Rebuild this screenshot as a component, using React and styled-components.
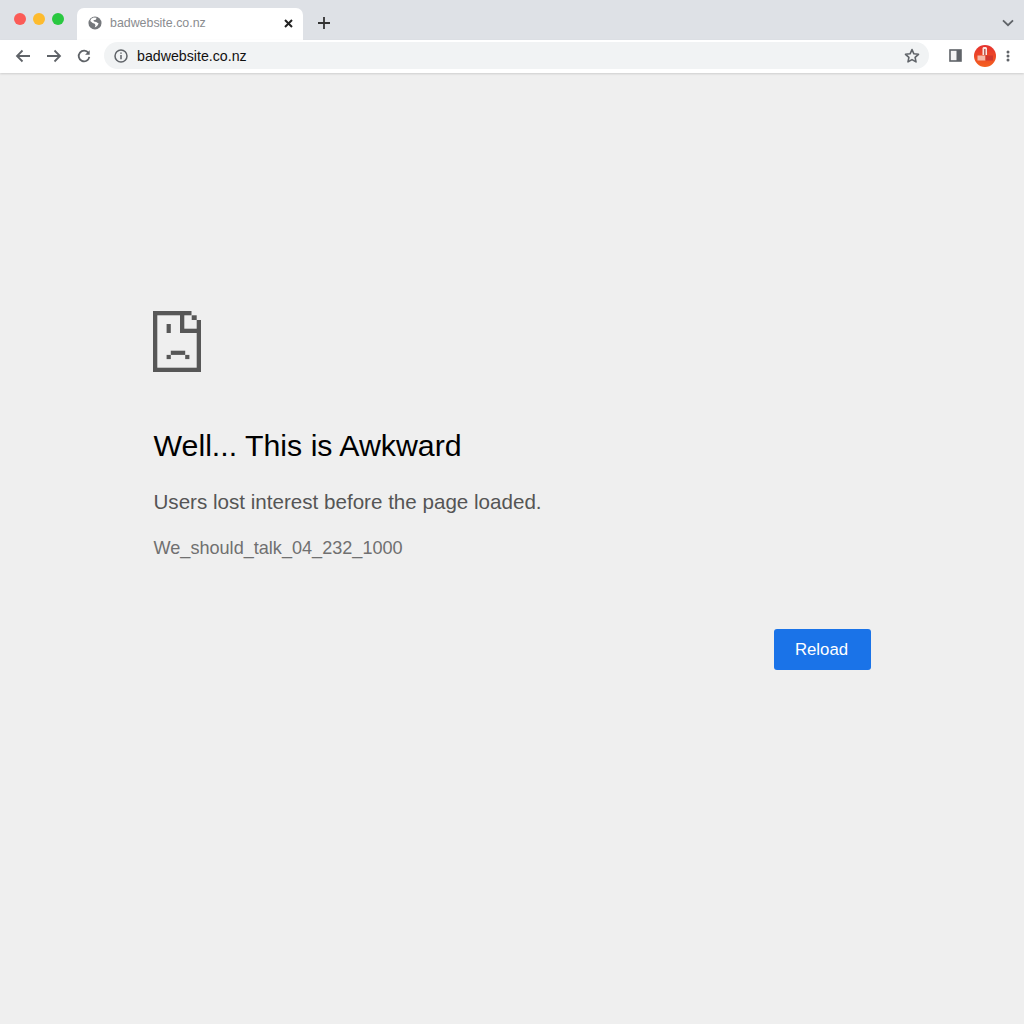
import React from 'react';
import styled, { createGlobalStyle } from 'styled-components';

const Global = createGlobalStyle`
  html, body { margin: 0; padding: 0; background: #efefef; }
  body { font-family: "Liberation Sans", Arial, sans-serif; }
`;

const Page = styled.div`
  width: 1024px;
  height: 1024px;
  display: flex;
  flex-direction: column;
  overflow: hidden;
  background: #efefef;
`;

// Browser chrome
const TabStrip = styled.div`
  height: 40px;
  flex: none;
  display: flex;
  align-items: flex-end;
  background: #dee1e6;
  padding-left: 14px;
  padding-right: 10px;
`;
const Lights = styled.div`
  display: flex;
  gap: 7px;
  align-self: flex-start;
  margin-top: 13px;
  margin-right: 13px;
`;
const Light = styled.span`
  width: 12px;
  height: 12px;
  border-radius: 50%;
  background: ${p => p.$color};
`;
const Tab = styled.div`
  width: 226px;
  height: 32px;
  box-sizing: border-box;
  display: flex;
  align-items: center;
  padding: 0 10px 2px 11px;
  background: #ffffff;
  border-radius: 7px 7px 0 0;
  font-size: 12.4px;
  color: #8a8c8f;
`;
const TabTitle = styled.span`
  flex: 1;
  margin-left: 8px;
`;
const NewTab = styled.div`
  display: flex;
  margin-left: 15px;
  margin-bottom: 11px;
`;
const TabMenu = styled.div`
  display: flex;
  margin-left: auto;
  margin-bottom: 13px;
`;
const Toolbar = styled.div`
  height: 33px;
  flex: none;
  box-sizing: border-box;
  display: flex;
  align-items: center;
  padding: 0 14px 2px 15px;
  background: #ffffff;
  box-shadow: 0 1px 2px rgba(0, 0, 0, 0.14);
  position: relative;
`;
const NavButtons = styled.div`
  display: flex;
  align-items: center;
  gap: 14.5px;
  width: 89px;
`;
const Omnibox = styled.div`
  width: 825px;
  height: 27px;
  box-sizing: border-box;
  display: flex;
  align-items: center;
  padding: 0 9px 0 10px;
  background: #f1f3f4;
  border-radius: 14px;
  font-size: 14.2px;
  color: #111111;
`;
const Url = styled.span`
  flex: 1;
  margin-left: 9px;
`;
const ToolbarRight = styled.div`
  display: flex;
  align-items: center;
  margin-left: auto;
  gap: 10px;
`;
const PanelSlot = styled.div`
  display: flex;
  margin-right: 2px;
`;

// Error content
const Main = styled.main`
  flex: 1;
  box-sizing: border-box;
  width: 871px;
  margin: 0;
  padding: 238px 0 0 153.5px;
  display: flex;
  flex-direction: column;
`;
const SadSvg = styled.svg`
  display: block;
  margin-left: -0.5px;
  fill: #575757;
`;
const Heading = styled.h1`
  margin: 57px 0 0;
  font-size: 30.3px;
  line-height: 34px;
  font-weight: 400;
  color: #000000;
`;
const Message = styled.p`
  margin: 27px 0 0;
  font-size: 20.6px;
  line-height: 24px;
  color: #555555;
`;
const Code = styled.p`
  margin: 23px 0 0;
  font-size: 18.1px;
  line-height: 22px;
  color: #707070;
`;
const Actions = styled.div`
  display: flex;
  justify-content: flex-end;
  margin-top: 70px;
`;
const ReloadButton = styled.button`
  width: 97px;
  height: 41px;
  border: 0;
  border-radius: 3px;
  padding: 0 2px 0 0;
  background: #1a73e8;
  color: #ffffff;
  font-family: inherit;
  font-size: 16.8px;
`;

const Back = ({ flip }) => (
  <svg width="16" height="16" viewBox="0 0 16 16" fill="none" stroke="#5f6368" strokeWidth="1.8"
    style={flip ? { transform: 'scaleX(-1)' } : undefined}>
    <path d="M15 8H2M7.5 2.5 2 8l5.5 5.5" />
  </svg>
);

const ReloadIcon = () => (
  <svg width="16" height="16" viewBox="-1 -1 18 18" fill="none">
    <path d="M13 4.6A6 6 0 1 0 14 9" stroke="#5f6368" strokeWidth="2" />
    <path d="M14.4 1.4v5.2H9.2z" fill="#5f6368" />
  </svg>
);

const GlobeIcon = () => (
  <svg width="14" height="14" viewBox="0 0 15 15">
    <circle cx="7.5" cy="7.5" r="7" fill="#75787c" />
    <path d="M6 1.6 3.4 3l-1 2.4L5 7.6l2.2.6.8 1.6-.8 2.4 2.6-1.6 1.6-2.6-2.6-1.6L6.4 6 5.8 4.6l2.6-.6.8-2z" fill="#ffffff" />
  </svg>
);

const CloseIcon = () => (
  <svg width="9" height="9" viewBox="0 0 9 9" stroke="#222222" strokeWidth="2">
    <path d="M1 1l7 7M8 1 1 8" />
  </svg>
);

const PlusIcon = () => (
  <svg width="12" height="12" viewBox="0 0 12 12" stroke="#333333" strokeWidth="1.8">
    <path d="M6 0v12M0 6h12" />
  </svg>
);

const ChevronIcon = () => (
  <svg width="12" height="8" viewBox="0 0 12 8" fill="none" stroke="#5f6368" strokeWidth="1.8">
    <path d="M1 1.4 6 6.2l5-4.8" />
  </svg>
);

const InfoIcon = () => (
  <svg width="14" height="14" viewBox="0 0 14 14" fill="none">
    <circle cx="7" cy="7" r="6" stroke="#5f6368" strokeWidth="1.5" />
    <path d="M7 6v4.2M7 3.4v1.4" stroke="#5f6368" strokeWidth="1.5" />
  </svg>
);

const StarIcon = () => (
  <svg width="16" height="15" viewBox="0 0 16 15" fill="none" stroke="#5f6368" strokeWidth="1.6" strokeLinejoin="round">
    <path d="M8 1.6 9.9 5.8l4.6.5-3.4 3.1.9 4.5L8 11.6l-4 2.3.9-4.5L1.5 6.3l4.6-.5z" />
  </svg>
);

const SidePanelIcon = () => (
  <svg width="13" height="13" viewBox="0 0 13 13">
    <rect x="1" y="1" width="11" height="11" fill="#f4f4f4" stroke="#5f6368" strokeWidth="1.6" />
    <rect x="7.5" y="1" width="4.5" height="11" fill="#5f6368" />
  </svg>
);

const Avatar = () => (
  <svg width="22" height="22" viewBox="0 0 22 22">
    <defs>
      <linearGradient id="av" x1="0" y1="0" x2="0" y2="1">
        <stop offset="0" stopColor="#e5302e" />
        <stop offset="1" stopColor="#f4601f" />
      </linearGradient>
    </defs>
    <circle cx="11" cy="11" r="11" fill="url(#av)" />
    <path d="M8.5 10V3l1-1h2.5l1 1v7z" fill="#fbe6e0" />
    <rect x="10" y="4" width="1.6" height="6" fill="#b9605a" />
    <rect x="3.5" y="10.5" width="8" height="5" fill="#f5b9a8" />
    <rect x="11.5" y="10.5" width="7.5" height="5" fill="#d0372e" />
  </svg>
);

const KebabIcon = () => (
  <svg width="4" height="12" viewBox="0 0 4 12" fill="#5f6368">
    <circle cx="2" cy="2" r="1.5" />
    <circle cx="2" cy="6" r="1.5" />
    <circle cx="2" cy="10" r="1.5" />
  </svg>
);

// the pixelated sad page
const SadPage = () => (
  <SadSvg width="48" height="61" viewBox="0 0 48 61">
    <rect x="0" y="0" width="4.3" height="61" />
    <rect x="0" y="0" width="38.5" height="4.3" />
    <rect x="0" y="56.7" width="48" height="4.3" />
    <rect x="43.7" y="9" width="4.3" height="52" />
    <rect x="27" y="0" width="4.3" height="22" />
    <rect x="27" y="17.7" width="21" height="4.3" />
    <rect x="38.7" y="4.3" width="5" height="4.7" />
    <rect x="13.6" y="13" width="4.2" height="9" />
    <rect x="17.8" y="39.7" width="14.4" height="4.2" />
    <rect x="13.6" y="43.9" width="4.2" height="4.2" />
    <rect x="32.2" y="43.9" width="4.2" height="4.2" />
  </SadSvg>
);

const App = () => (
  <Page>
    <Global />
    <TabStrip>
      <Lights>
        <Light $color="#fb5b57" />
        <Light $color="#fdbb2e" />
        <Light $color="#29c840" />
      </Lights>
      <Tab>
        <GlobeIcon />
        <TabTitle>badwebsite.co.nz</TabTitle>
        <CloseIcon />
      </Tab>
      <NewTab><PlusIcon /></NewTab>
      <TabMenu><ChevronIcon /></TabMenu>
    </TabStrip>
    <Toolbar>
      <NavButtons>
        <Back />
        <Back flip />
        <ReloadIcon />
      </NavButtons>
      <Omnibox>
        <InfoIcon />
        <Url>badwebsite.co.nz</Url>
        <StarIcon />
      </Omnibox>
      <ToolbarRight>
        <PanelSlot><SidePanelIcon /></PanelSlot>
        <Avatar />
        <KebabIcon />
      </ToolbarRight>
    </Toolbar>
    <Main>
      <SadPage />
      <Heading>Well... This is Awkward</Heading>
      <Message>Users lost interest before the page loaded.</Message>
      <Code>We_should_talk_04_232_1000</Code>
      <Actions>
        <ReloadButton>Reload</ReloadButton>
      </Actions>
    </Main>
  </Page>
);

export default App;
